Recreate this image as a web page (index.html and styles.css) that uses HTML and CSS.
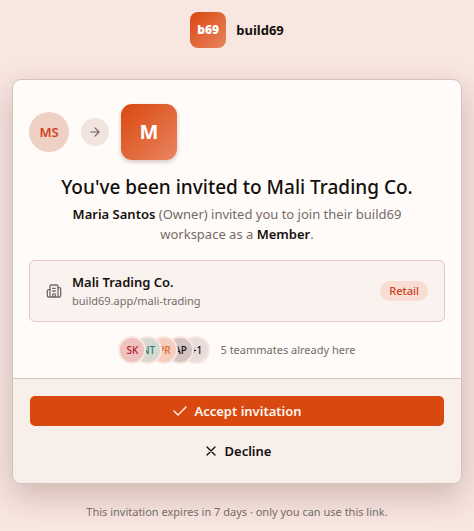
FILE: index.html
```html
<!DOCTYPE html>
<html lang="en">
    <head>
        <meta charset="utf-8">
        <meta name="viewport" content="width=device-width, initial-scale=1">
        <title>Join Mali Trading Co. - build69</title>
        <link rel="stylesheet" href="styles.css">
    </head>
    <body>
    <header class="brand">
        <span class="brand-logo">b69</span>
        <span class="brand-name">build69</span>
    </header>

    <main class="card">
        <div class="card-body">
            <div class="people">
                <span class="inviter">MS</span>
                <span class="arrow">
                    <svg class="icon" width="14" height="14" viewBox="0 0 24 24"><path d="M5 12h14M12 5l7 7-7 7"/></svg>
                </span>
                <span class="workspace-logo">M</span>
            </div>

            <h1>You've been invited to Mali Trading Co.</h1>
            <p class="message"><strong>Maria Santos</strong> (Owner) invited you to join their build69 workspace as a <strong>Member</strong>.</p>

            <div class="workspace">
                <svg class="icon" width="16" height="16" viewBox="0 0 24 24">
                    <path d="M10 12h4M10 8h4M14 21v-3a2 2 0 0 0-4 0v3"/>
                    <path d="M6 10H4a2 2 0 0 0-2 2v7a2 2 0 0 0 2 2h16a2 2 0 0 0 2-2V9a2 2 0 0 0-2-2h-2"/>
                    <path d="M6 21V5a2 2 0 0 1 2-2h8a2 2 0 0 1 2 2v16"/>
                </svg>
                <div class="workspace-info">
                    <div class="workspace-name">Mali Trading Co.</div>
                    <div class="workspace-url">build69.app/mali-trading</div>
                </div>
                <span class="tag">Retail</span>
            </div>

            <div class="team">
                <div class="avatars">
                    <span class="avatar red">SK</span>
                    <span class="avatar green">NT</span>
                    <span class="avatar orange">PR</span>
                    <span class="avatar brown">AP</span>
                    <span class="avatar more">+1</span>
                </div>
                <span class="team-text">5 teammates already here</span>
            </div>
        </div>

        <div class="card-footer">
            <button class="btn btn-primary" type="button">
                <svg class="icon" width="16" height="16" viewBox="0 0 24 24"><path d="M21 6L9 18l-6-6"/></svg>
                Accept invitation
            </button>
            <button class="btn" type="button">
                <svg class="icon" width="16" height="16" viewBox="0 0 24 24"><path d="M18 6L6 18M6 6l12 12"/></svg>
                Decline
            </button>
        </div>
    </main>

    <p class="note">This invitation expires in 7 days · only you can use this link.</p>
    </body>
</html>
```
FILE: styles.css
```css
*{
    box-sizing: border-box;
}
body{
    margin: 0;
    padding: 12px 12px 8px;
    min-height: 100vh;
    background-color: #f8e6e0;
    color: #14100e;
    font-family: "Segoe UI", "Noto Sans", sans-serif;
    font-size: 13px;
    line-height: 20px;
}
h1, p{
    margin: 0;
}
strong{
    font-weight: 600;
}
.icon{
    flex: none;
    fill: none;
    stroke: currentColor;
    stroke-width: 2;
    stroke-linecap: round;
    stroke-linejoin: round;
}

/* Brand */
.brand{
    display: flex;
    align-items: center;
    justify-content: center;
    gap: 10px;
    margin-bottom: 31px;
}
.brand-logo{
    display: grid;
    place-items: center;
    width: 36px;
    height: 36px;
    border-radius: 8px;
    background: linear-gradient(135deg, #da480f, #e88560);
    color: #fff;
    font-size: 12px;
    font-weight: 900;
}
.brand-name{
    font-weight: 700;
}

/* Card */
.card{
    max-width: 450px;
    margin: 0 auto;
    overflow: hidden;
    border: 1px solid #d3c2be;
    border-radius: 9px;
    background-color: #fffbf8;
    box-shadow: 0 12px 32px rgba(80, 30, 30, 0.24);
}
.card-body{
    padding: 24px 16px 14px;
}
.people{
    display: flex;
    align-items: center;
    gap: 12px;
    margin-bottom: 15px;
}
.inviter{
    display: grid;
    place-items: center;
    width: 40px;
    height: 40px;
    border-radius: 50%;
    background-color: #efd0c5;
    color: #d1451a;
    font-weight: 600;
}
.arrow{
    display: grid;
    place-items: center;
    width: 28px;
    height: 28px;
    border-radius: 50%;
    background-color: #f1e4de;
    color: #6d625e;
}
.workspace-logo{
    display: grid;
    place-items: center;
    width: 56px;
    height: 56px;
    border-radius: 11px;
    background: linear-gradient(135deg, #da480f, #e88560);
    box-shadow: 0 2px 4px rgba(60, 20, 10, 0.22);
    color: #fff;
    font-size: 20px;
    font-weight: 700;
}
h1{
    font-size: 19px;
    font-weight: 500;
    line-height: 24px;
    text-align: center;
}
.message{
    margin: 5px auto 16px;
    max-width: 360px;
    color: #746b68;
    text-align: center;
}
.message strong{
    color: #14100e;
}

/* Workspace */
.workspace{
    display: flex;
    align-items: center;
    gap: 10px;
    padding: 11px 16px;
    border: 1px solid #e2c7c2;
    border-radius: 6px;
    background-color: #faf2ef;
    color: #746b68;
}
.workspace-info{
    flex: 1;
}
.workspace-name{
    color: #14100e;
    font-weight: 600;
}
.workspace-url{
    font-size: 11px;
    line-height: 18px;
}
.tag{
    padding: 0 9px;
    border-radius: 10px;
    background-color: #f9ddd2;
    color: #c8431c;
    font-size: 11px;
    font-weight: 500;
}

/* Team */
.team{
    display: flex;
    align-items: center;
    justify-content: center;
    gap: 10px;
    margin-top: 14px;
}
.avatars{
    display: flex;
}
.avatar{
    position: relative;
    display: grid;
    place-items: center;
    width: 28px;
    height: 28px;
    border: 2px solid #f8e6e0;
    border-radius: 50%;
    color: #14100e;
    font-size: 10px;
    font-weight: 500;
}
.avatar + .avatar{
    margin-left: -12px;
}
/* first avatars lie over the next ones */
.red{
    z-index: 4;
    background-color: #efc2bf;
    color: #b3202b;
}
.green{
    z-index: 3;
    background-color: #d5d9cf;
    color: #258367;
}
.orange{
    z-index: 2;
    background-color: #f5cdbd;
    color: #df652f;
}
.brown{
    z-index: 1;
    background-color: #d5c4c1;
}
.more{
    background-color: #e9dcda;
}
.team-text{
    color: #746b68;
    font-size: 11px;
}

/* Footer */
.card-footer{
    display: flex;
    flex-direction: column;
    gap: 10px;
    padding: 17px;
    border-top: 1px solid #d3c2be;
    background-color: #f8eeea;
}
.btn{
    display: flex;
    align-items: center;
    justify-content: center;
    gap: 6px;
    width: 100%;
    height: 30px;
    padding: 0;
    border: 0;
    border-radius: 5px;
    background: none;
    color: #14100e;
    font: inherit;
    font-weight: 600;
    cursor: pointer;
}
.btn-primary{
    background-color: #d9480f;
    color: #fff6ee;
}
.note{
    margin-top: 18px;
    color: #746b68;
    font-size: 11px;
    text-align: center;
}
```
